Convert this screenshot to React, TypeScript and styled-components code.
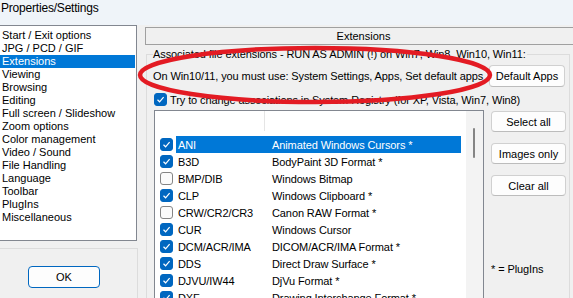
import React from 'react';
import styled, { createGlobalStyle } from 'styled-components';

const Global = createGlobalStyle`
  html, body { margin: 0; padding: 0; background: #f0f0f0; overflow: hidden; }
  body { font-family: "Liberation Sans", Arial, sans-serif; color: #000; }
  * { box-sizing: border-box; }
`;

const Window = styled.div`
  position: relative;
  width: 573px;
  height: 298px;
  overflow: hidden;
  background: #f0f0f0;
  display: flex;
  flex-direction: column;
`;

const TitleBar = styled.div`
  flex: none;
  height: 25px;
  background: #eff4f9;
  font: 12px "Liberation Sans", Arial, sans-serif;
  letter-spacing: -0.2px;
  line-height: 16px;
  padding: 0 0 0 1px;
`;

const Body = styled.div`
  flex: 1;
  display: flex;
  min-height: 0;
`;

const LeftColumn = styled.div`
  flex: none;
  width: 145px;
  display: flex;
  flex-direction: column;
`;

const PageList = styled.div`
  width: 137px;
  height: 216px;
  background: #fff;
  border: 1px solid #828790;
  border-left: none;
  padding-top: 3px;
  font: 11px "Liberation Sans", Arial, sans-serif;
`;

const PageItem = styled.div<{ $selected?: boolean }>`
  width: 135px;
  height: 13px;
  line-height: 13px;
  padding-left: 2px;
  white-space: nowrap;
  background: ${(p) => (p.$selected ? '#0078d7' : 'transparent')};
  color: ${(p) => (p.$selected ? '#fff' : '#000')};
`;

const LowerFrame = styled.div`
  flex: 1;
  width: 138px;
  margin-top: 7px;
  border-top: 1px solid #dcdcdc;
  border-right: 1px solid #dcdcdc;
  padding: 17px 0 0 28px;
`;

const Button = styled.button<{ $default?: boolean; $w?: number; $h?: number }>`
  display: block;
  width: ${(p) => p.$w ?? 76}px;
  height: ${(p) => p.$h ?? 21}px;
  padding: 0;
  background: #fdfdfd;
  border: 1px solid ${(p) => (p.$default ? '#0067c0' : '#d0d0d0')};
  border-bottom-color: ${(p) => (p.$default ? '#0067c0' : '#bcbcbc')};
  border-radius: 4px;
  font: 11px "Liberation Sans", Arial, sans-serif;
  color: #000;
`;

const RightPanel = styled.div`
  flex: 1;
  display: flex;
  flex-direction: column;
  padding-top: 2px;
  min-width: 0;
`;

const HeaderBox = styled.div`
  height: 18px;
  margin-right: -4px;
  border: 1px solid #a0a0a0;
  border-right: none;
  font: 11px "Liberation Sans", Arial, sans-serif;
  line-height: 16px;
  text-align: center;
  padding-left: 4px;
`;

const Group = styled.fieldset`
  flex: 1;
  margin: 2px 3px 0 1px;
  padding: 0 4px 0 6px;
  border: 1px solid #dcdcdc;
  min-width: 0;
  font: 11px "Liberation Sans", Arial, sans-serif;
  letter-spacing: -0.1px;
`;

const Legend = styled.legend`
  padding: 0 1px 0 0;
  margin-left: 0;
  line-height: 14px;
  white-space: nowrap;
`;

const InfoRow = styled.div`
  display: flex;
  align-items: center;
  justify-content: space-between;
  margin-top: 4px;
  height: 22px;
  white-space: nowrap;
`;

const CheckRow = styled.label`
  display: flex;
  align-items: center;
  gap: 3px;
  margin: 6px 0 0 1px;
  height: 13px;
  white-space: nowrap;
`;

const ListRow = styled.div`
  display: flex;
  margin-top: 4px;
  align-items: flex-start;
`;

const ExtList = styled.div`
  flex: none;
  width: 330px;
  height: 200px;
  margin-left: 1px;
  background: #fff;
  border: 1px solid #828790;
  display: flex;
`;

const ExtMain = styled.div`
  flex: 1;
  min-width: 0;
`;

const ExtHeader = styled.div`
  height: 20px;
  margin-bottom: 5px;
  display: flex;
`;

const HeaderCell = styled.div<{ $w: number }>`
  width: ${(p) => p.$w}px;
  border-right: 1px solid #e5e5e5;
`;

const Row = styled.div`
  height: 17px;
  display: flex;
  align-items: center;
  padding-left: 5px;
  white-space: nowrap;
`;

const Cells = styled.div<{ $selected?: boolean }>`
  margin-left: 3px;
  width: 285px;
  height: 17px;
  display: flex;
  align-items: center;
  background: ${(p) => (p.$selected ? '#0078d7' : 'transparent')};
  color: ${(p) => (p.$selected ? '#fff' : '#000')};
`;

const ExtCell = styled.span`
  width: 96px;
  padding-left: 2px;
`;

const DescCell = styled.span`
  flex: 1;
`;

const ScrollTrack = styled.div`
  flex: none;
  width: 17px;
  background: #f3f3f3;
`;

const ScrollThumb = styled.div`
  margin: 17px 0 0 7px;
  width: 2px;
  height: 30px;
  border-radius: 1px;
  background: #858585;
`;

const ButtonCol = styled.div`
  flex: none;
  margin: 1px 0 0 7px;
  display: flex;
  flex-direction: column;
  gap: 11px;
`;

const Note = styled.div`
  margin-top: 55px;
  line-height: 14px;
  white-space: nowrap;
`;

const Box = styled.span<{ $checked?: boolean }>`
  flex: none;
  width: 13px;
  height: 13px;
  border-radius: 3px;
  border: 1px solid ${(p) => (p.$checked ? '#0067c0' : '#858585')};
  background: ${(p) => (p.$checked ? '#0067c0' : '#fbfbfb')};
  display: flex;
  align-items: center;
  justify-content: center;
`;

const Annotation = styled.svg`
  position: absolute;
  left: 136px;
  top: 44px;
  pointer-events: none;
`;

function Check({ checked }: { checked?: boolean }) {
  return (
    <Box $checked={checked}>
      {checked && (
        <svg width="9" height="9" viewBox="0 0 9 9">
          <polyline points="1.5,4.8 3.6,6.8 7.6,2.2" fill="none" stroke="#fff" strokeWidth="1.2" />
        </svg>
      )}
    </Box>
  );
}

const pages = [
  'Start / Exit options',
  'JPG / PCD / GIF',
  'Extensions',
  'Viewing',
  'Browsing',
  'Editing',
  'Full screen / Slideshow',
  'Zoom options',
  'Color management',
  'Video / Sound',
  'File Handling',
  'Language',
  'Toolbar',
  'PlugIns',
  'Miscellaneous',
];

const exts: [string, string, boolean][] = [
  ['ANI', 'Animated Windows Cursors *', true],
  ['B3D', 'BodyPaint 3D Format *', true],
  ['BMP/DIB', 'Windows Bitmap', false],
  ['CLP', 'Windows Clipboard *', true],
  ['CRW/CR2/CR3', 'Canon RAW Format *', false],
  ['CUR', 'Windows Cursor', true],
  ['DCM/ACR/IMA', 'DICOM/ACR/IMA Format *', true],
  ['DDS', 'Direct Draw Surface *', true],
  ['DJVU/IW44', 'DjVu Format *', true],
  ['DXF', 'Drawing Interchange Format *', true],
];

export default function App() {
  return (
    <Window>
      <Global />
      <TitleBar>Properties/Settings</TitleBar>
      <Body>
        <LeftColumn>
          <PageList>
            {pages.map((p) => (
              <PageItem key={p} $selected={p === 'Extensions'}>
                {p}
              </PageItem>
            ))}
          </PageList>
          <LowerFrame>
            <Button $default $w={72} $h={22}>OK</Button>
          </LowerFrame>
        </LeftColumn>
        <RightPanel>
          <HeaderBox>Extensions</HeaderBox>
          <Group>
            <Legend>Associated file extensions - RUN AS ADMIN (!) on Win7, Win8, Win10, Win11:</Legend>
            <InfoRow>
              <span>On Win10/11, you must use: System Settings, Apps, Set default apps</span>
              <Button $h={22}>Default Apps</Button>
            </InfoRow>
            <CheckRow>
              <Check checked />
              <span>Try to change associations in System Registry (for XP, Vista, Win7, Win8)</span>
            </CheckRow>
            <ListRow>
              <ExtList>
                <ExtMain>
                  <ExtHeader>
                    <HeaderCell $w={110} />
                  </ExtHeader>
                  {exts.map(([e, d, c], i) => (
                    <Row key={e}>
                      <Check checked={c} />
                      <Cells $selected={i === 0}>
                        <ExtCell>{e}</ExtCell>
                        <DescCell>{d}</DescCell>
                      </Cells>
                    </Row>
                  ))}
                </ExtMain>
                <ScrollTrack>
                  <ScrollThumb />
                </ScrollTrack>
              </ExtList>
              <ButtonCol>
                <Button $w={75}>Select all</Button>
                <Button $w={75}>Images only</Button>
                <Button $w={75}>Clear all</Button>
                <Note>* = PlugIns</Note>
              </ButtonCol>
            </ListRow>
          </Group>
        </RightPanel>
      </Body>
      <Annotation width="360" height="66" viewBox="0 0 360 66">
        <ellipse cx="179" cy="31" rx="175" ry="27" fill="none" stroke="#e31b23" strokeWidth="4.5" />
      </Annotation>
    </Window>
  );
}
